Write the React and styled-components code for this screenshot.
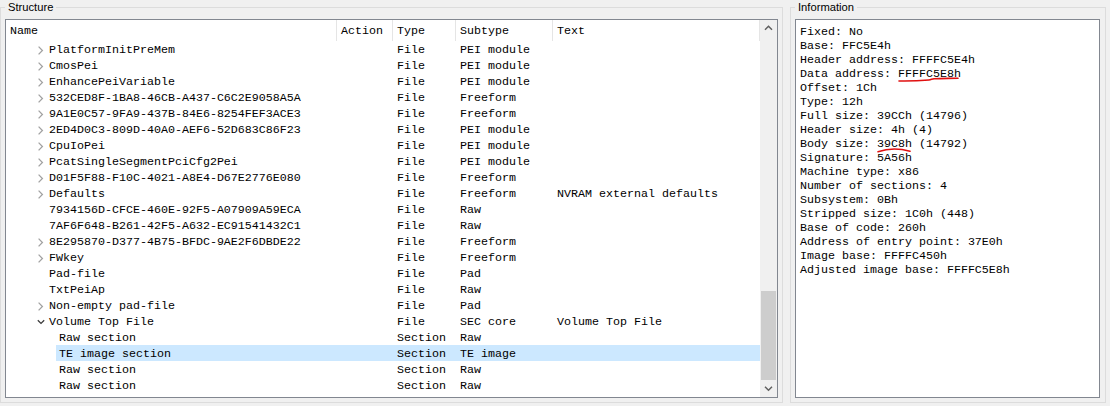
import React from 'react';
import styled, { createGlobalStyle } from 'styled-components';

const GlobalStyle = createGlobalStyle`
  html, body { margin: 0; padding: 0; background: #f0f0f0; }
  body { width: 1110px; height: 406px; overflow: hidden; }
`;

const MONO = `"Liberation Mono", "DejaVu Sans Mono", monospace`;

const Page = styled.div`
  display: flex;
  align-items: flex-start;
  gap: 7px;
  height: 406px;
  font-family: ${MONO};
  font-size: 11.67px;
  color: #000;
`;

const GroupBox = styled.fieldset`
  box-sizing: border-box;
  width: ${(p) => p.$width}px;
  min-width: 0;
  margin: 0;
  padding: 5px ${(p) => p.$padRight}px 4px 4px;
  border: 1px solid #dcdcdc;
`;

const Legend = styled.legend`
  margin: 0;
  padding: 0 3px;
  font-family: "Liberation Sans", Arial, sans-serif;
  font-size: 11.2px;
  line-height: 14px;
  color: #000;
`;

const TreeFrame = styled.div`
  display: flex;
  height: 379px;
  box-sizing: border-box;
  border: 1px solid #828790;
  background: #fff;
`;

const TreeMain = styled.div`
  flex: 1;
  min-width: 0;
  display: flex;
  flex-direction: column;
  overflow: hidden;
`;

const Header = styled.div`
  display: flex;
  flex: none;
  height: 21px;
`;

const HeaderCell = styled.div`
  box-sizing: border-box;
  flex: ${(p) => (p.$grow ? '1' : 'none')};
  width: ${(p) => (p.$grow ? 'auto' : `${p.$w}px`)};
  height: 21px;
  padding-left: 4px;
  line-height: 23px;
  border-right: 1px solid #e5e5e5;
  white-space: nowrap;
  overflow: hidden;
`;

const Row = styled.div`
  display: flex;
  flex: none;
  height: 16px;
  white-space: nowrap;
`;

const Branch = styled.div`
  flex: none;
  width: ${(p) => 40 + p.$depth * 10}px;
  display: flex;
  justify-content: flex-end;
`;

const ArrowBox = styled.svg`
  width: 10px;
  height: 16px;
  flex: none;
`;

const RowBody = styled.div`
  flex: 1;
  display: flex;
  background: ${(p) => (p.$selected ? '#cce8ff' : 'transparent')};
`;

const Cell = styled.div`
  box-sizing: border-box;
  flex: ${(p) => (p.$grow ? '1' : 'none')};
  width: ${(p) => (p.$grow ? 'auto' : `${p.$w}px`)};
  height: 16px;
  line-height: 18px;
  padding-left: ${(p) => p.$pad}px;
  overflow: hidden;
`;

const ScrollBar = styled.div`
  flex: none;
  width: 17px;
  display: flex;
  flex-direction: column;
  background: #f0f0f0;
`;

const ScrollButton = styled.svg`
  flex: none;
  width: 17px;
  height: 17px;
`;

const ScrollTrack = styled.div`
  flex: 1;
  display: flex;
  flex-direction: column;
  justify-content: flex-end;
`;

const Thumb = styled.div`
  height: 89px;
  margin: 0 1px;
  background: #cdcdcd;
`;

const InfoBox = styled.div`
  box-sizing: border-box;
  height: 379px;
  border: 1px solid #828790;
  background: #fff;
  padding: 5px 4px 4px;
  line-height: 14px;
  white-space: pre;
  overflow: hidden;
`;

const InfoLine = styled.div`
  height: 14px;
`;

const Marked = styled.span`
  position: relative;
`;

const Scribble = styled.svg`
  position: absolute;
  left: 0;
  top: 0;
  overflow: visible;
  pointer-events: none;
`;

const COLS = { name: 331, action: 56, type: 63, subtype: 97 };

const rows = [
  { name: 'PlatformInitPreMem', arrow: 'c', type: 'File', sub: 'PEI module' },
  { name: 'CmosPei', arrow: 'c', type: 'File', sub: 'PEI module' },
  { name: 'EnhancePeiVariable', arrow: 'c', type: 'File', sub: 'PEI module' },
  { name: '532CED8F-1BA8-46CB-A437-C6C2E9058A5A', arrow: 'c', type: 'File', sub: 'Freeform' },
  { name: '9A1E0C57-9FA9-437B-84E6-8254FEF3ACE3', arrow: 'c', type: 'File', sub: 'Freeform' },
  { name: '2ED4D0C3-809D-40A0-AEF6-52D683C86F23', arrow: 'c', type: 'File', sub: 'PEI module' },
  { name: 'CpuIoPei', arrow: 'c', type: 'File', sub: 'PEI module' },
  { name: 'PcatSingleSegmentPciCfg2Pei', arrow: 'c', type: 'File', sub: 'PEI module' },
  { name: 'D01F5F88-F10C-4021-A8E4-D67E2776E080', arrow: 'c', type: 'File', sub: 'Freeform' },
  { name: 'Defaults', arrow: 'c', type: 'File', sub: 'Freeform', text: 'NVRAM external defaults' },
  { name: '7934156D-CFCE-460E-92F5-A07909A59ECA', type: 'File', sub: 'Raw' },
  { name: '7AF6F648-B261-42F5-A632-EC91541432C1', type: 'File', sub: 'Raw' },
  { name: '8E295870-D377-4B75-BFDC-9AE2F6DBDE22', arrow: 'c', type: 'File', sub: 'Freeform' },
  { name: 'FWkey', arrow: 'c', type: 'File', sub: 'Freeform' },
  { name: 'Pad-file', type: 'File', sub: 'Pad' },
  { name: 'TxtPeiAp', type: 'File', sub: 'Raw' },
  { name: 'Non-empty pad-file', arrow: 'c', type: 'File', sub: 'Pad' },
  { name: 'Volume Top File', arrow: 'e', type: 'File', sub: 'SEC core', text: 'Volume Top File' },
  { name: 'Raw section', depth: 1, type: 'Section', sub: 'Raw' },
  { name: 'TE image section', depth: 1, type: 'Section', sub: 'TE image', selected: true },
  { name: 'Raw section', depth: 1, type: 'Section', sub: 'Raw' },
  { name: 'Raw section', depth: 1, type: 'Section', sub: 'Raw' },
];

const info = [
  ['Fixed: No'],
  ['Base: FFC5E4h'],
  ['Header address: FFFFC5E4h'],
  ['Data address: ', 'FFFFC5E8h', '', 'under'],
  ['Offset: 1Ch'],
  ['Type: 12h'],
  ['Full size: 39CCh (14796)'],
  ['Header size: 4h (4)'],
  ['Body size: ', '39C8h', ' (14792)', 'arc'],
  ['Signature: 5A56h'],
  ['Machine type: x86'],
  ['Number of sections: 4'],
  ['Subsystem: 0Bh'],
  ['Stripped size: 1C0h (448)'],
  ['Base of code: 260h'],
  ['Address of entry point: 37E0h'],
  ['Image base: FFFFC450h'],
  ['Adjusted image base: FFFFC5E8h'],
];

const marks = {
  under: 'M1 14 C 12 14.2, 24 13.6, 31 13 C 33 12.8, 34 11.9, 36 11.7 C 45 11.4, 53 11.4, 60 11.2',
  arc: 'M1 14.8 Q 16 9.4, 33 14.2',
};

function Arrow({ kind }) {
  if (!kind) return <ArrowBox viewBox="0 0 10 16" />;
  if (kind === 'e') {
    return (
      <ArrowBox viewBox="0 0 10 16">
        <path d="M1.8 7.2 L5 10.4 L8.2 7.2" fill="none" stroke="#3c3c3c" strokeWidth="1.3" />
      </ArrowBox>
    );
  }
  return (
    <ArrowBox viewBox="0 0 10 16">
      <path d="M2.6 5.6 L6.4 9.5 L2.6 13.4" fill="none" stroke="#a2a2a2" strokeWidth="1.3" />
    </ArrowBox>
  );
}

function TreeRow({ r }) {
  const depth = r.depth || 0;
  const branchW = 40 + depth * 10;
  return (
    <Row>
      <Branch $depth={depth}>
        <Arrow kind={r.arrow} />
      </Branch>
      <RowBody $selected={r.selected}>
        <Cell $w={COLS.name - branchW} $pad={3}>{r.name}</Cell>
        <Cell $w={COLS.action} $pad={4}></Cell>
        <Cell $w={COLS.type} $pad={4}>{r.type}</Cell>
        <Cell $w={COLS.subtype} $pad={4}>{r.sub}</Cell>
        <Cell $grow $pad={4}>{r.text || ''}</Cell>
      </RowBody>
    </Row>
  );
}

export default function App() {
  return (
    <>
      <GlobalStyle />
      <Page>
        <GroupBox $width={783} $padRight={4}>
          <Legend>Structure</Legend>
          <TreeFrame>
            <TreeMain>
              <Header>
                <HeaderCell $w={COLS.name}>Name</HeaderCell>
                <HeaderCell $w={COLS.action}>Action</HeaderCell>
                <HeaderCell $w={COLS.type}>Type</HeaderCell>
                <HeaderCell $w={COLS.subtype}>Subtype</HeaderCell>
                <HeaderCell $grow>Text</HeaderCell>
              </Header>
              {rows.map((r, i) => (
                <TreeRow key={i} r={r} />
              ))}
            </TreeMain>
            <ScrollBar>
              <ScrollButton viewBox="0 0 17 17">
                <path d="M5 9.8 L8.5 6.3 L12 9.8" fill="none" stroke="#606060" strokeWidth="1.5" />
              </ScrollButton>
              <ScrollTrack>
                <Thumb />
              </ScrollTrack>
              <ScrollButton viewBox="0 0 17 17">
                <path d="M5 6.8 L8.5 10.3 L12 6.8" fill="none" stroke="#606060" strokeWidth="1.5" />
              </ScrollButton>
            </ScrollBar>
          </TreeFrame>
        </GroupBox>
        <GroupBox $width={316} $padRight={5}>
          <Legend>Information</Legend>
          <InfoBox>
            {info.map(([pre, mark, post, kind], i) => (
              <InfoLine key={i}>
                {pre}
                {mark && (
                  <Marked>
                    {mark}
                    <Scribble width="60" height="16">
                      <path d={marks[kind]} fill="none" stroke="#e01010" strokeWidth="1.6" strokeLinecap="round" />
                    </Scribble>
                  </Marked>
                )}
                {post}
              </InfoLine>
            ))}
          </InfoBox>
        </GroupBox>
      </Page>
    </>
  );
}
